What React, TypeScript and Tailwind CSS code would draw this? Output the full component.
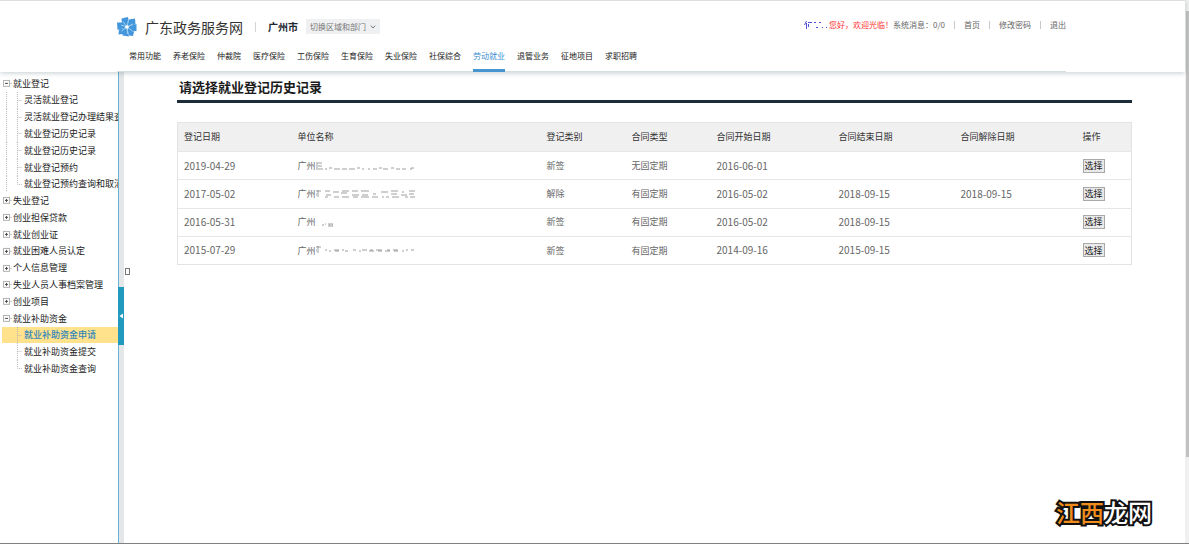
import React from "react";

type TreeRow = {
  label: string;
  kind: "open" | "closed" | "leaf";
  guide?: boolean;
  last?: boolean;
  active?: boolean;
};

const tree: TreeRow[] = [
  { label: "就业登记", kind: "open" },
  { label: "灵活就业登记", kind: "leaf", guide: true },
  { label: "灵活就业登记办理结果查", kind: "leaf", guide: true },
  { label: "就业登记历史记录", kind: "leaf", guide: true },
  { label: "就业登记历史记录", kind: "leaf", guide: true },
  { label: "就业登记预约", kind: "leaf", guide: true },
  { label: "就业登记预约查询和取消", kind: "leaf", guide: true, last: true },
  { label: "失业登记", kind: "closed" },
  { label: "创业担保贷款", kind: "closed" },
  { label: "就业创业证", kind: "closed" },
  { label: "就业困难人员认定", kind: "closed" },
  { label: "个人信息管理", kind: "closed" },
  { label: "失业人员人事档案管理", kind: "closed" },
  { label: "创业项目", kind: "closed" },
  { label: "就业补助资金", kind: "open" },
  { label: "就业补助资金申请", kind: "leaf", active: true },
  { label: "就业补助资金提交", kind: "leaf" },
  { label: "就业补助资金查询", kind: "leaf", last: true },
];

const nav = [
  "常用功能", "养老保险", "仲裁院", "医疗保险", "工伤保险", "生育保险",
  "失业保险", "社保综合", "劳动就业", "退管业务", "征地项目", "求职招聘",
];

const columns = [
  { name: "登记日期", width: "w-[114px]" },
  { name: "单位名称", width: "w-[249px]" },
  { name: "登记类别", width: "w-[85px]" },
  { name: "合同类型", width: "w-[85px]" },
  { name: "合同开始日期", width: "w-[122px]" },
  { name: "合同结束日期", width: "w-[122px]" },
  { name: "合同解除日期", width: "w-[122px]" },
  { name: "操作", width: "w-[55px]" },
];

const records = [
  {
    date: "2019-04-29", unit: "广州", kind: "新签", term: "无固定期",
    start: "2016-06-01", end: "", cancel: "",
    mask: "M1 1v6M2 2h4M2 5h4M0 8h7M9 8h2M13 7h3M18 8h6M26 8h5M33 8h6M41 7h3M46 8h2M52 8h2M57 8h4M63 7h3M67 8h5M75 7h3M80 8h4M86 8h4M95 7h3M94 8h2",
  },
  {
    date: "2017-05-02", unit: "广州", kind: "解除", term: "有固定期",
    start: "2016-05-02", end: "2018-09-15", cancel: "2018-09-15",
    mask: "M0 2h5M2 1v7M0 4v3M9 2h5M10 6h5M9 8h3M17 3h6M18 8h5M26 2h7M25 4h6M26 8h7M36 2h6M36 6h7M37 8h5M45 2h8M46 6h6M45 8h8M57 5h3M56 8h6M65 3h7M66 8h2M70 8h3M75 2h7M75 5h6M76 8h7M86 3h2M85 6h6M89 8h3M93 2h6M93 5h5M94 8h5",
  },
  {
    date: "2016-05-31", unit: "广州", kind: "新签", term: "有固定期",
    start: "2016-05-02", end: "2018-09-15", cancel: "",
    mask: "M6 8h2M9 7h1M12 7h5M13 8h1M16 8h1M12 9h5",
  },
  {
    date: "2015-07-29", unit: "广州", kind: "新签", term: "有固定期",
    start: "2014-09-16", end: "2015-09-15", cancel: "",
    mask: "M0 2h5M2 1v7M0 4v3M9 5h2M13 6h2M18 5h5M19 6h4M26 5h2M29 6h3M37 5h3M43 6h2M46 5h5M53 6h5M54 5h3M60 5h6M62 6h4M69 6h5M71 5h3M77 5h5M78 6h4M86 6h2M90 5h2M95 5h3",
  },
];

function Logo() {
  return (
    <svg viewBox="0 0 20 20" className="size-5 shrink-0" aria-hidden="true">
      <g fill="#4297dc">
        <path d="M4.500 1.500L11 0l1 5-2 5-5-3z" />
        <path d="M12 2.500l6-1 .5 6L10 10z" />
        <path d="M19.500 7l0 7-5 .5L10 10z" />
        <path d="M17 15l-1 4-4-.5L10 10z" />
        <path d="M12 19.500l-6.500-1L6 14l4-4z" />
        <path d="M1.500 17.500l.5-5 8-2.500-4 7z" />
        <path d="M0 5.500l5 0 5 4.500-9.500 3z" />
      </g>
      <path d="M10 10L6 4.500M10 10l1.500-7M10 10l6-3M10 10l5.500 4M10 10l.5 7M10 10l-5.500 4M10 10L4 8" stroke="#cfe6f8" strokeWidth="0.700" />
      <circle cx="10" cy="10" r="1.800" fill="#fff" />
    </svg>
  );
}

function Branch({ row }: { row: TreeRow }) {
  if (row.kind === "leaf") {
    return (
      <svg viewBox="0 0 24 17" className="h-full w-6 shrink-0" aria-hidden="true">
        <g stroke="#b5b5b5" strokeWidth="1" strokeDasharray="1 1" fill="none">
          {row.guide && <path d="M6.5 0V17" />}
          <path d={row.last ? "M17.5 0V8.5H22" : "M17.5 0V17M17.5 8.5H22"} />
        </g>
      </svg>
    );
  }
  return (
    <svg viewBox="0 0 13 17" className="h-full w-[13px] shrink-0" aria-hidden="true">
      <rect x="3.5" y="5.5" width="6" height="6" fill="#fff" stroke="#b0b0b0" />
      <path d={row.kind === "open" ? "M5 8.5H8" : "M5 8.5H8M6.5 7V10"} stroke="#444" />
      <path d="M10 8.5H12" stroke="#c4c4c4" />
    </svg>
  );
}

function Separator() {
  return <span className="h-2 w-px bg-[#c8c8c8]" />;
}

export default function App() {
  return (
    <div className="flex h-screen flex-col overflow-hidden border-b border-[#808080] bg-white font-['Noto_Sans_CJK_SC',sans-serif] text-[#333]">
      <div className="flex min-h-0 flex-1">
        <div className="flex min-w-0 flex-1 flex-col">
          <header className="relative z-10 border-t border-[#dedede] bg-white pr-[119px] pl-[117px] shadow-[0_1px_5px_rgba(60,90,100,0.3)]">
            <div className="flex h-[46px] items-center justify-between pt-[5px]">
              <div className="flex items-center">
                <Logo />
                <h1 className="ml-2 text-[14px] leading-5">广东政务服务网</h1>
                <span className="mx-3 h-[10px] w-px bg-[#d5d5d5]" />
                <strong className="text-[10px] leading-4 text-[#1d2731]">广州市</strong>
                <button type="button" className="ml-2 flex h-[15px] items-center gap-1 bg-[#eff0f1] px-1 text-[8px] text-[#777]">
                  切换区域和部门
                  <svg viewBox="0 0 6 4" className="h-1 w-[6px]" fill="none" stroke="#777" aria-hidden="true">
                    <path d="M.8 .6L3 3L5.200 .6" />
                  </svg>
                </button>
              </div>
              <div className="flex items-center gap-[9px] pb-1 text-[8px] leading-4 text-[#666]">
                <p className="flex items-center">
                  <svg viewBox="0 0 24 8" className="h-2 w-6" stroke="#5151d8" fill="none" aria-hidden="true">
                    <path d="M2.500 0L.5 4M2.500 2V8M4 1.500H8M4.500 3V6M10 1.500H12M12 6.500H14M15 1.500H17M18 6.500H19M22 6.500H23" />
                  </svg>
                  <span className="ml-px text-[#ff3333]">您好，欢迎光临！</span>
                  <span>系统消息：0/0</span>
                </p>
                <Separator />
                <a href="#home">首页</a>
                <Separator />
                <a href="#password">修改密码</a>
                <Separator />
                <a href="#logout">退出</a>
              </div>
            </div>
            <nav className="flex h-[25px] gap-3 border-b border-[#d5dfe2] pl-3 text-[8px] leading-[18px] text-[#222]">
              {nav.map((item) => (
                <a
                  key={item}
                  href="#nav"
                  className={item === "劳动就业" ? "h-[25px] border-b-3 border-[#4796d2] text-[#3d8fd3]" : "h-6"}
                >
                  {item}
                </a>
              ))}
            </nav>
          </header>

          <div className="flex min-h-0 flex-1">
            <aside className="w-[118px] shrink-0 overflow-hidden pt-[3px]">
              <ul className="grid h-[302px] auto-rows-fr text-[9px]">
                {tree.map((row, i) => (
                  <li key={i} className={row.active ? "min-h-0 border-l-2 border-white bg-[#ffe28b] bg-clip-padding" : "min-h-0"}>
                    <a
                      href="#tree"
                      className={
                        row.active
                          ? "-ml-[2px] flex h-full items-center whitespace-nowrap font-medium text-[#2f86bd]"
                          : "flex h-full items-center whitespace-nowrap text-[#222]"
                      }
                    >
                      <Branch row={row} />
                      {row.label}
                    </a>
                  </li>
                ))}
              </ul>
            </aside>

            <div className="relative w-[6px] shrink-0 border-l border-[#63b4d6] bg-[#e4e6e7]">
              <button
                type="button"
                aria-label="收起菜单"
                className="absolute top-[215px] -left-px flex h-[58px] w-[6px] items-center justify-center bg-[#219abd]"
              >
                <svg viewBox="0 0 4 6" className="h-[6px] w-1" fill="#fff" aria-hidden="true">
                  <path d="M4 0.500V5.500L0.500 3z" />
                </svg>
              </button>
            </div>

            <main className="relative min-w-0 flex-1 px-[53px] pt-[6px]">
              <span className="absolute top-[196px] left-[1px] h-[7px] w-[5px] border border-[#777]" />
              <h2 className="border-b-3 border-[#1c2c38] pb-1 pl-[2px] text-[13px] leading-[18px] font-bold text-[#1a1a1a]">
                请选择就业登记历史记录
              </h2>
              <table className="mt-[19px] h-[143px] w-full table-fixed border-collapse border border-[#e3e3e3] text-left text-[9px] text-[#666]">
                <thead>
                  <tr className="h-[29px] bg-[#f0f0f0] text-[#333]">
                    {columns.map((c) => (
                      <th key={c.name} scope="col" className={`${c.width} px-[6px] font-normal`}>
                        {c.name}
                      </th>
                    ))}
                  </tr>
                </thead>
                <tbody>
                  {records.map((r) => (
                    <tr key={r.date} className="border-t border-[#e6e6e6]">
                      <td className="px-[6px] text-[10px] leading-4">{r.date}</td>
                      <td className="px-[6px]">
                        <span className="flex items-center">
                          {r.unit}
                          <svg viewBox="0 0 100 10" className="h-[10px] w-[100px]" stroke="#777" strokeWidth="0.700" fill="none" aria-hidden="true">
                            <path d={r.mask} />
                          </svg>
                        </span>
                      </td>
                      <td className="px-[6px]">{r.kind}</td>
                      <td className="px-[6px]">{r.term}</td>
                      <td className="px-[6px] text-[10px] leading-4">{r.start}</td>
                      <td className="px-[6px] text-[10px] leading-4">{r.end}</td>
                      <td className="px-[6px] text-[10px] leading-4">{r.cancel}</td>
                      <td className="px-[6px]">
                        <button
                          type="button"
                          className="flex h-[14px] items-center border border-[#a9a9a9] bg-[#e9e9e9] px-px text-[9px] text-[#222]"
                        >
                          选择
                        </button>
                      </td>
                    </tr>
                  ))}
                </tbody>
              </table>
            </main>
          </div>
        </div>

        <div className="flex w-1 shrink-0 flex-col bg-[#f0f0f0] pt-[11px] pl-px" aria-hidden="true">
          <div className="h-[446px] bg-[#c1c1c1]" />
        </div>
      </div>

      <div className="absolute right-[37px] bottom-4 text-[24px] leading-8 font-medium text-white [-webkit-text-stroke:4px_#111] [paint-order:stroke_fill]">
        <span className="text-[#ef8c1c]">江西</span>龙网
      </div>
    </div>
  );
}
